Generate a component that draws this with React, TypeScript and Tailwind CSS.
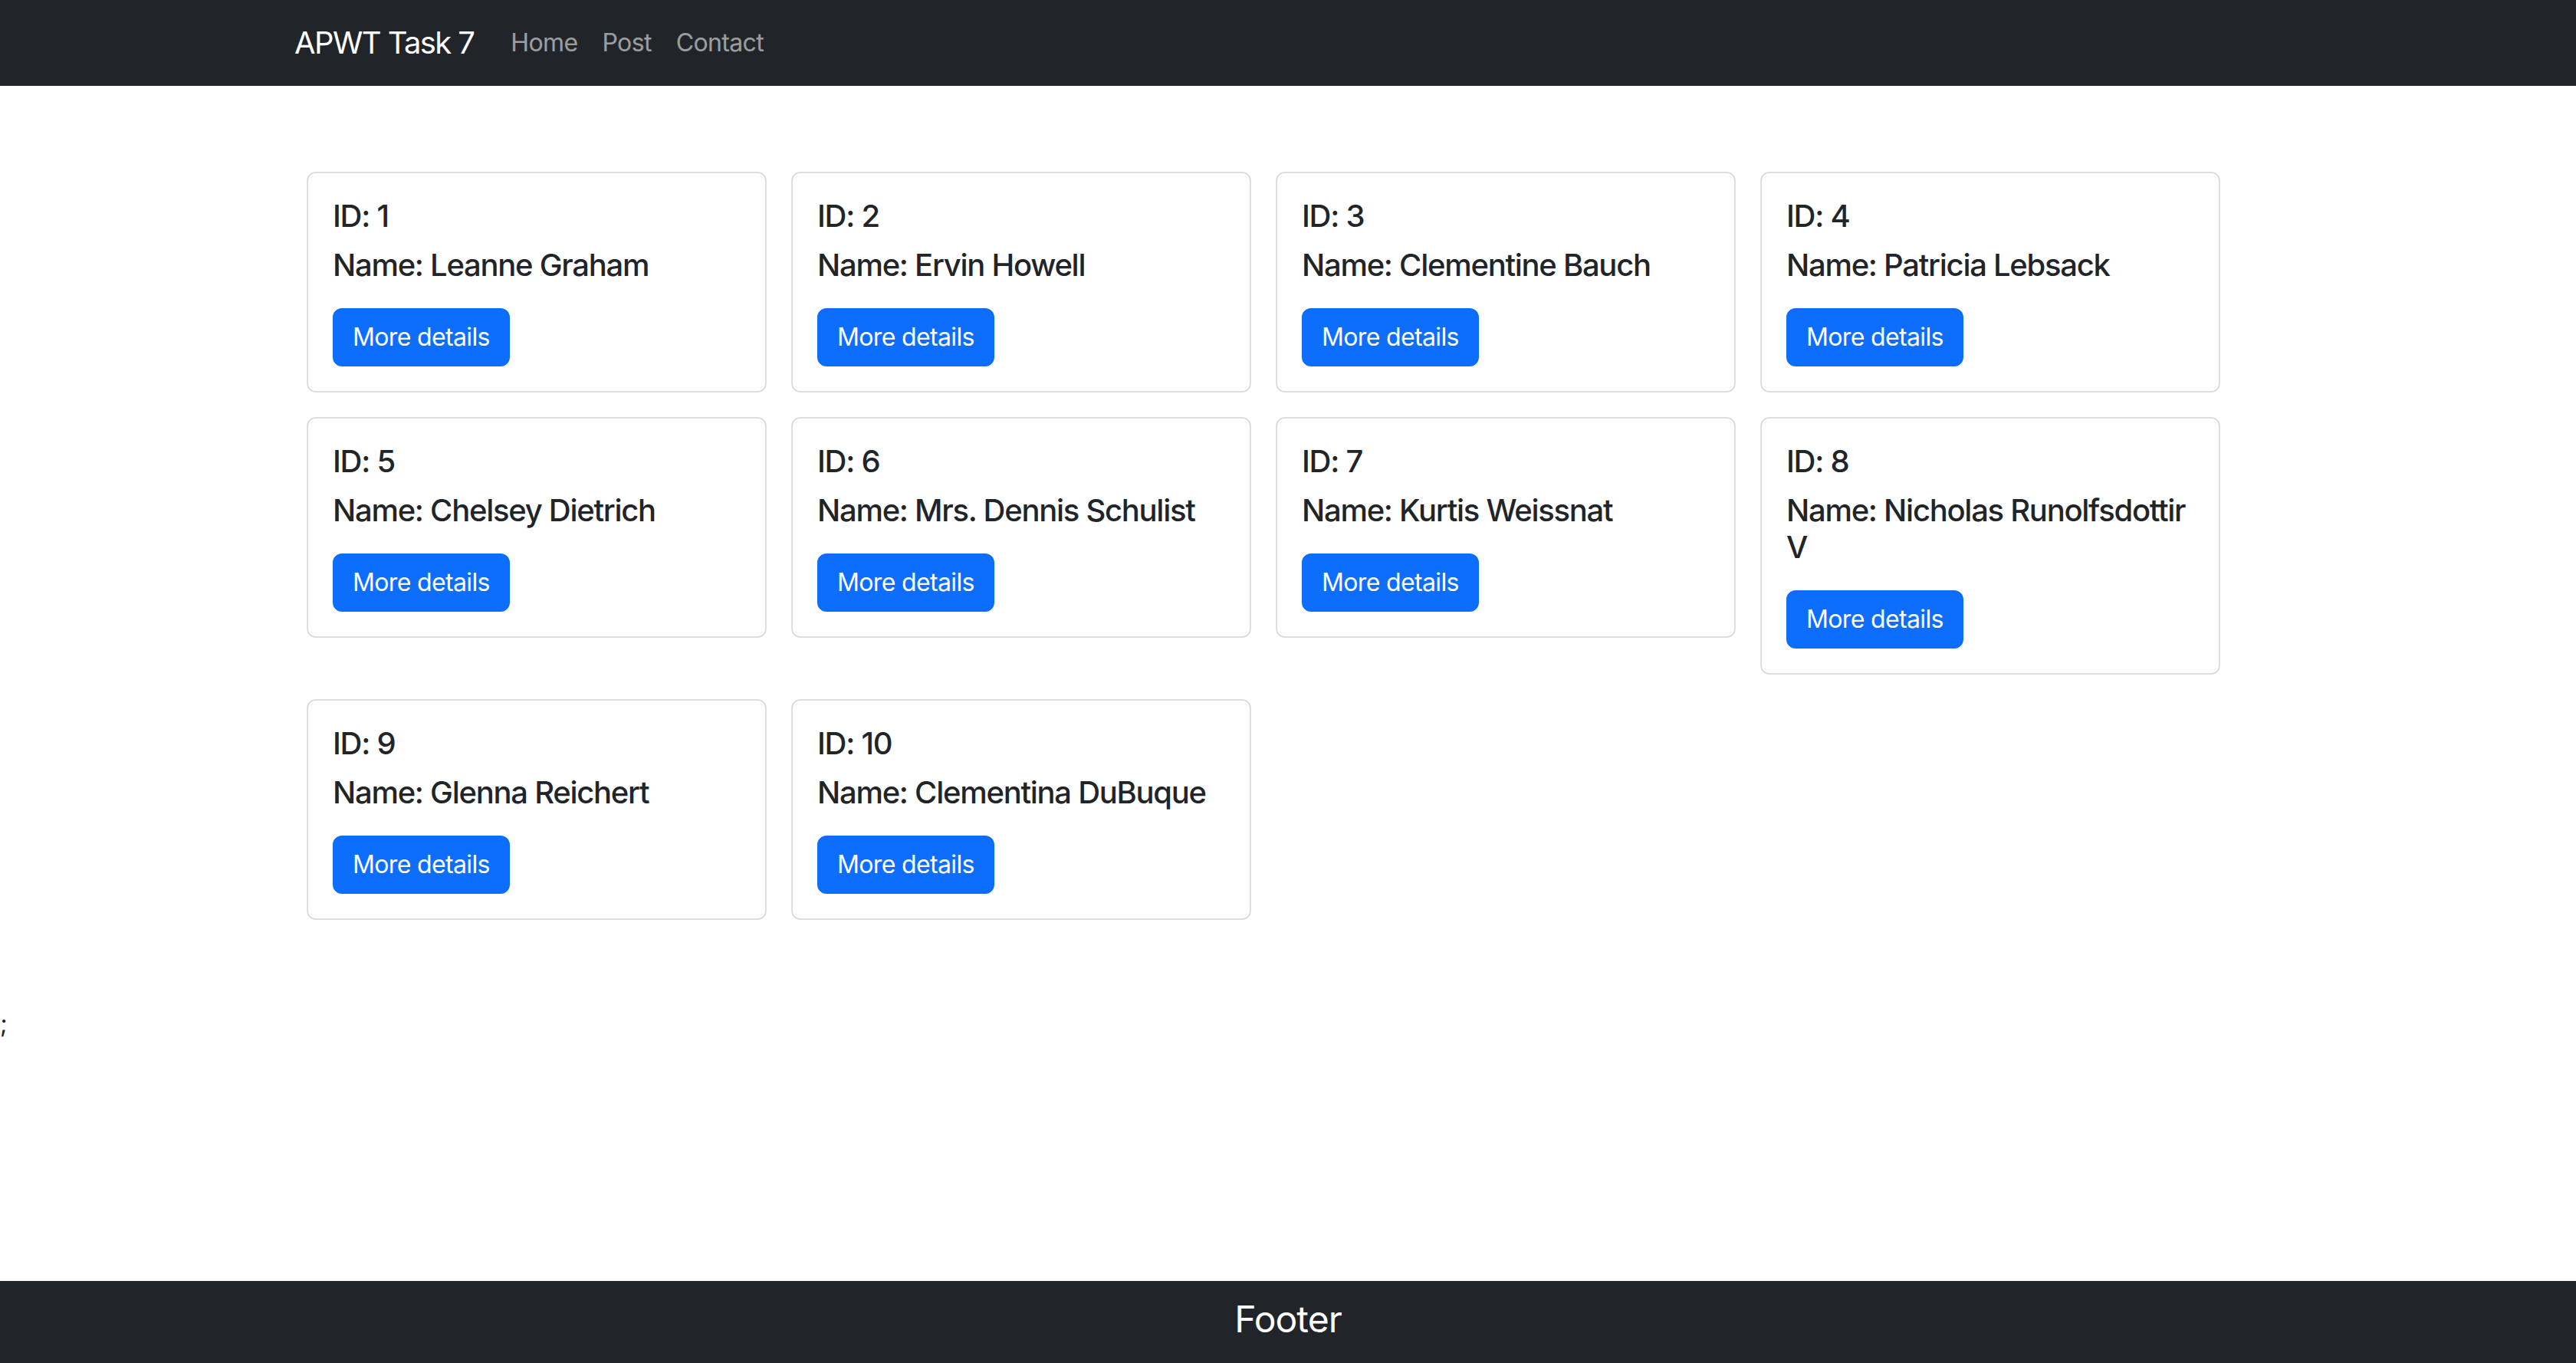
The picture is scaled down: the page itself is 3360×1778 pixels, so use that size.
import React from "react";

const users = [
  { id: 1, name: "Leanne Graham" },
  { id: 2, name: "Ervin Howell" },
  { id: 3, name: "Clementine Bauch" },
  { id: 4, name: "Patricia Lebsack" },
  { id: 5, name: "Chelsey Dietrich" },
  { id: 6, name: "Mrs. Dennis Schulist" },
  { id: 7, name: "Kurtis Weissnat" },
  { id: 8, name: "Nicholas Runolfsdottir V" },
  { id: 9, name: "Glenna Reichert" },
  { id: 10, name: "Clementina DuBuque" },
];

function NavBar() {
  return (
    <nav className="bg-[#212529] h-[112px]">
      <div className="mx-auto w-[2640px] h-full px-[24px] flex items-center">
        <a href="#" className="mr-[32px] text-[40px] leading-[60px] tracking-[-0.04em] text-white">
          APWT Task 7
        </a>
        <ul className="flex">
          {["Home", "Post", "Contact"].map((item) => (
            <li key={item}>
              <a
                href="#"
                className="block px-[16px] text-[32px] leading-[48px] tracking-[-0.02em] text-white/55 hover:text-white/75"
              >
                {item}
              </a>
            </li>
          ))}
        </ul>
      </div>
    </nav>
  );
}

function UserCard({ id, name }: { id: number; name: string }) {
  return (
    <div className="m-[16px] w-[600px] rounded-[12px] border-2 border-[#dedede] bg-white p-[32px]">
      <h5 className="mb-[16px] text-[40px] leading-[48px] font-medium tracking-[-0.032em]">ID: {id}</h5>
      <h5 className="mb-[32px] text-[40px] leading-[48px] font-medium tracking-[-0.032em]">Name: {name}</h5>
      <button
        type="button"
        className="rounded-[12px] border-2 border-[#0d6efd] bg-[#0d6efd] px-[24px] py-[12px] text-[32px] leading-[48px] tracking-[-0.02em] text-white hover:bg-[#0b5ed7]"
      >
        More details
      </button>
    </div>
  );
}

export default function App() {
  return (
    <div className="min-h-screen flex flex-col bg-white text-[#212529] font-['Inter',sans-serif]">
      <NavBar />

      {/* User list */}
      <main className="mx-auto mt-[96px] mb-[96px] w-[2640px] px-[24px]">
        <div className="flex flex-wrap items-start">
          {users.map((u) => (
            <UserCard key={u.id} id={u.id} name={u.name} />
          ))}
        </div>
      </main>

      <div className="text-[32px] leading-[48px]">;</div>

      <footer className="mt-auto h-[107px] bg-[#212529] flex items-center justify-center pb-[8px]">
        <h4 className="text-[48px] leading-[58px] tracking-[-0.02em] text-white">Footer</h4>
      </footer>
    </div>
  );
}
